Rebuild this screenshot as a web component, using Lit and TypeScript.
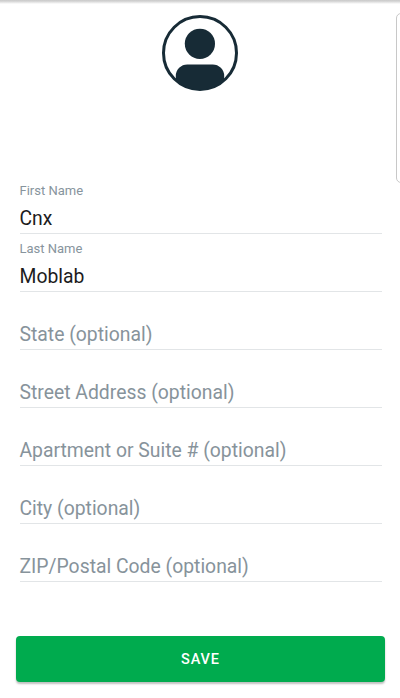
import { LitElement, html, css } from "lit";
import { customElement, property } from "lit/decorators.js";

@customElement("form-field")
class FormField extends LitElement {
  @property() label = "";
  @property() value = "";

  static styles = css`
    :host {
      display: flex;
      flex-direction: column;
      box-sizing: border-box;
      height: 58.1px;
      border-bottom: 1px solid #e2e5e7;
      white-space: nowrap;
    }
    .label {
      height: 16px;
      padding-top: 7px;
      font-size: 13px;
      line-height: 16px;
      color: #87949d;
    }
    .text {
      margin-top: 8px;
      font-size: 19.35px;
      line-height: 24px;
      color: #1c1c1c;
    }
    .placeholder {
      margin-top: 31px;
      color: #87939b;
    }
  `;

  render() {
    return this.value
      ? html`<div class="label">${this.label}</div>
          <div class="text">${this.value}</div>`
      : html`<div class="text placeholder">${this.label}</div>`;
  }
}

@customElement("app-root")
class AppRoot extends LitElement {
  static styles = css`
    :host {
      display: flex;
      flex-direction: column;
      position: relative;
      box-sizing: border-box;
      height: 698px;
      overflow: hidden;
      background: #fff;
      font-family: Roboto, sans-serif;
    }
    .top-shadow {
      flex: none;
      height: 4px;
      background: linear-gradient(#c9c9c9, #d6d6d6 35%, #fff);
    }
    .avatar {
      flex: none;
      display: block;
      width: 78px;
      height: 78px;
      margin: 9.6px 0 0 161.2px;
    }
    .side-panel {
      position: absolute;
      left: 396px;
      top: 13px;
      width: 20px;
      height: 168px;
      border: 1px solid #c8c8c8;
      border-radius: 5px;
    }
    .fields {
      display: flex;
      flex-direction: column;
      margin: 84px 18.5px 0 19.5px;
    }
    .save {
      flex: none;
      height: 46.5px;
      margin: 53.3px 15px 0 16px;
      padding: 2px 0 0;
      border: 0;
      border-radius: 4px;
      background: #00ab4e;
      box-shadow: 0 2px 2px rgba(0, 0, 0, 0.25);
      color: #fff;
      font: 500 14.5px/44px Roboto, sans-serif;
      letter-spacing: 0.85px;
      text-align: center;
    }
  `;

  render() {
    return html`
      <div class="top-shadow"></div>
      <svg class="avatar" viewBox="0 0 78 78" fill="#172b36">
        <circle cx="39" cy="39" r="36.5" fill="none" stroke="#172b36" stroke-width="3" />
        <circle cx="38.9" cy="29.8" r="15.1" />
        <path d="M14.8 66.5V62a11.5 11.5 0 0 1 11.5-11.5h25.4A11.5 11.5 0 0 1 63.2 62v4.5A37 37 0 0 1 14.8 66.5Z" />
      </svg>
      <div class="side-panel"></div>
      <div class="fields">
        <form-field label="First Name" value="Cnx"></form-field>
        <form-field label="Last Name" value="Moblab"></form-field>
        <form-field label="State (optional)"></form-field>
        <form-field label="Street Address (optional)"></form-field>
        <form-field label="Apartment or Suite # (optional)"></form-field>
        <form-field label="City (optional)"></form-field>
        <form-field label="ZIP/Postal Code (optional)"></form-field>
      </div>
      <button class="save">SAVE</button>
    `;
  }
}
